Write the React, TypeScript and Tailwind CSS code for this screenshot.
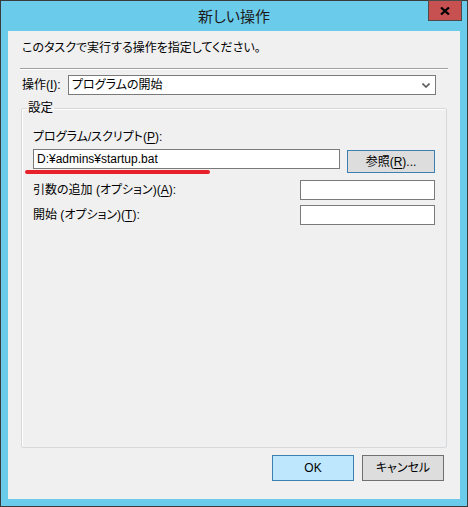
import React from "react";

const font = "font-['Liberation_Sans','Noto_Sans_CJK_JP',sans-serif] [font-feature-settings:'palt']";

function Acc({ k }: { k: string }) {
  return (
    <>
      (<span className="underline underline-offset-2">{k}</span>)
    </>
  );
}

function TextBox({ className, value }: { className: string; value?: string }) {
  return (
    <div className={`h-[20px] border border-[#7a7a7a] bg-white pl-[3px] text-[12px] leading-[18px] ${className}`}>
      {value}
    </div>
  );
}

export default function App() {
  return (
    <div className={`flex h-[507px] w-[468px] flex-col border border-[#3b3b3b] bg-[#6bcbea] text-[12px] text-black ${font}`}>
      {/* title bar */}
      <div className="relative flex h-[30px] items-center justify-center">
        <span className="text-[15px] leading-none text-[#1c1c1c]">新しい操作</span>
        <div className="absolute right-[5px] top-[-1px] flex h-[21px] w-[34px] items-center justify-center border border-[#4b4b4b] bg-[#c75050]">
          <svg width="10" height="8" viewBox="0 0 10 8">
            <path d="M1 0.5 L9 7.5 M9 0.5 L1 7.5" stroke="#000" strokeWidth="2.2" />
          </svg>
        </div>
      </div>

      {/* client area */}
      <div className="mx-[7px] mb-[7px] flex h-[468px] flex-col bg-[#f0f0f0]">
        <p className="pl-[14px] pt-[9px] leading-[16px]">このタスクで実行する操作を指定してください。</p>

        <div className="mx-[12px] mt-[12px] h-[2px] border-t border-[#a0a0a0] border-b border-b-white" />

        <div className="mt-[5px] flex items-center pl-[14px]">
          <span className="w-[46px] leading-[16px]">
            操作<Acc k="I" />:
          </span>
          <div className="flex h-[20px] w-[368px] items-center justify-between border border-[#7a7a7a] bg-white pl-[3px] pr-[5px]">
            <span className="leading-[18px]">プログラムの開始</span>
            <svg width="8" height="5" viewBox="0 0 8 5">
              <path d="M0.5 0.5 L4 4 L7.5 0.5" stroke="#5a5a5a" strokeWidth="1.6" fill="none" />
            </svg>
          </div>
        </div>

        <fieldset className="mx-[13px] mt-[5px] h-[348px] rounded-[2px] border border-[#d5d9dc] px-[11px] shadow-[inset_1px_1px_0_#fff]">
          <legend className="ml-[-6px] px-[1px] text-[12.5px] leading-[16px]">設定</legend>

          <div className="mt-[13px] leading-[16px]">
            プログラム/スクリプト<Acc k="P" />:
          </div>
          <div className="mt-[4px] flex items-start">
            <div className="relative">
              <TextBox className="w-[307px]" value="D:¥admins¥startup.bat" />
              <div className="absolute left-[-8px] top-[21px] h-[4px] w-[185px] rounded-full bg-[#e8202a]" />
            </div>
            <button className="ml-[7px] mt-[1px] h-[23px] w-[88px] border border-[#3c7fb1] bg-[#dddddd] text-[12px] leading-none">
              参照<Acc k="R" />...
            </button>
          </div>

          <div className="mt-[7px] flex items-center justify-between">
            <span className="leading-[16px]">
              引数の追加 (オプション)<Acc k="A" />:
            </span>
            <TextBox className="w-[135px]" />
          </div>
          <div className="mt-[5px] flex items-center justify-between">
            <span className="leading-[16px]">
              開始 (オプション)<Acc k="T" />:
            </span>
            <TextBox className="w-[135px]" />
          </div>
        </fieldset>

        <div className="mr-[16px] mt-[7px] flex justify-end gap-[8px]">
          <button className="h-[26px] w-[82px] border border-[#3c7fb1] bg-[#bee6fd] text-[12px]">OK</button>
          <button className="h-[26px] w-[82px] border border-[#707070] bg-[#dddddd] text-[12px]">キャンセル</button>
        </div>
      </div>
    </div>
  );
}
